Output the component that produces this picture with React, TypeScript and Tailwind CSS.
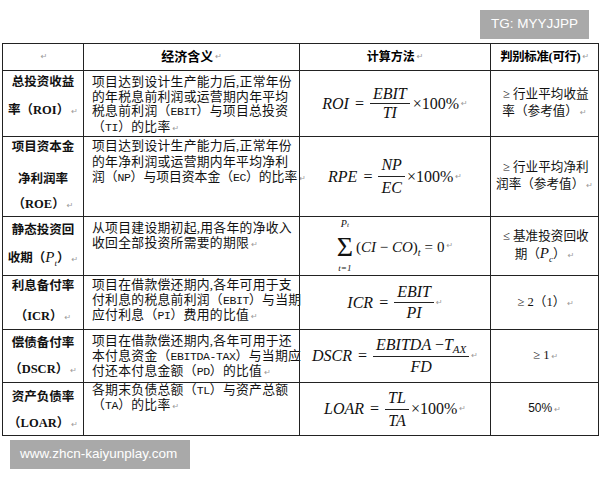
import React from "react";

function Ret() {
  return (
    <span className="font-['DejaVu_Sans',sans-serif] text-[8px] text-[#9a9a9a] ml-[2px] not-italic font-normal">↵</span>
  );
}

function Lat({ children }: { children: React.ReactNode }) {
  return <span className="font-['Liberation_Mono',monospace] text-[11.5px] tracking-[-0.4px]">{children}</span>;
}

function Ge({ c = "≥" }: { c?: string }) {
  return <span className="inline-block w-[12.6px] text-center">{c}</span>;
}

function Frac({ num, den, lh = "leading-[18px]" }: { num: React.ReactNode; den: React.ReactNode; lh?: string }) {
  return (
    <span className="inline-flex flex-col items-center">
      <span className={`px-[3px] ${lh}`}>{num}</span>
      <span className="h-px w-full bg-[#222]"></span>
      <span className={`px-[3px] ${lh}`}>{den}</span>
    </span>
  );
}

const cell = "border-l border-[#222]";
const c1 = `${cell} flex flex-col items-center font-bold text-[12.5px] leading-[20px] text-[#111] whitespace-nowrap`;
const c2 = `${cell} pl-[8px] text-[12.8px] tracking-[0.3px] leading-[14.5px] text-[#111] whitespace-nowrap`;
const c3 = `${cell} flex items-center justify-center font-['Liberation_Serif',serif] text-[16px] text-[#111] whitespace-nowrap`;
const c4 = `${cell} flex flex-col items-center justify-center text-[12.6px] leading-[17px] text-[#111] whitespace-nowrap`;
const grid = "grid grid-cols-[81px_216px_191px_108px] border-t border-[#222]";

export default function App() {
  return (
    <div className="w-[600px] h-[480px] bg-white overflow-hidden font-['Liberation_Serif','Noto_Sans_CJK_SC',serif]">
      <div className="h-[43px] flex justify-end items-start pt-[10px] pr-[11px]">
        <div className="w-[109px] h-[29px] bg-[#a9a9a9] text-white flex items-center justify-center text-[13.5px] font-['Liberation_Sans',sans-serif]">
          TG: MYYJJPP
        </div>
      </div>

      <div className="ml-[2px] w-[597px] border-r border-b border-[#222]">
        {/* header */}
        <div className={`${grid} h-[27px]`}>
          <div className={`${cell} flex items-center justify-center`}>
            <Ret />
          </div>
          <div className={`${cell} flex items-center justify-center font-bold text-[13px]`}>
            经济含义<Ret />
          </div>
          <div className={`${cell} flex items-center justify-center font-bold text-[12px]`}>
            计算方法<Ret />
          </div>
          <div className={`${cell} flex items-center justify-center font-bold text-[12.4px] tracking-[-0.3px]`}>
            判别标准(可行)<Ret />
          </div>
        </div>

        {/* ROI */}
        <div className={`${grid} h-[66px]`}>
          <div className={c1}>
            <div className="mt-[1px]">总投资收益</div>
            <div className="mt-[8px]">率（ROI）<Ret /></div>
          </div>
          <div className={`${c2} pt-[4px]`}>
            <div>项目达到设计生产能力后,正常年份</div>
            <div>的年税息前利润或运营期内年平均</div>
            <div>税息前利润（<Lat>EBIT</Lat>）与项目总投资</div>
            <div>（<Lat>TI</Lat>）的比率<Ret /></div>
          </div>
          <div className={c3}>
            <span className="italic">ROI</span>
            <span className="mx-[6px]">=</span>
            <Frac num={<span className="italic">EBIT</span>} den={<span className="italic">TI</span>} />
            <span className="ml-[3px]">×100%</span>
            <Ret />
          </div>
          <div className={c4}>
            <div><Ge />行业平均收益</div>
            <div>率（参考值）<Ret /></div>
          </div>
        </div>

        {/* ROE */}
        <div className={`${grid} h-[80px]`}>
          <div className={c1}>
            <div className="mt-[0px]">项目资本金</div>
            <div className="mt-[12px]">净利润率</div>
            <div className="mt-[5px]">（ROE）<Ret /></div>
          </div>
          <div className={`${c2} pt-[2px] leading-[15.5px]`}>
            <div>项目达到设计生产能力后,正常年份</div>
            <div>的年净利润或运营期内年平均净利</div>
            <div className="tracking-[0px]">润（<Lat>NP</Lat>）与项目资本金（<Lat>EC</Lat>）的比率<Ret /></div>
          </div>
          <div className={c3}>
            <span className="italic">RPE</span>
            <span className="mx-[6px]">=</span>
            <Frac num={<span className="italic">NP</span>} den={<span className="italic">EC</span>} lh="leading-[22px]" />
            <span className="ml-[2px]">×100%</span>
            <Ret />
          </div>
          <div className={c4}>
            <div><Ge />行业平均净利</div>
            <div>润率（参考值）<Ret /></div>
          </div>
        </div>

        {/* Pt */}
        <div className={`${grid} h-[59px]`}>
          <div className={c1}>
            <div className="mt-[3px]">静态投资回</div>
            <div className="mt-[7px]">
              收期（
              <span className="font-['Liberation_Serif',serif] italic font-normal text-[15px]">P</span>
              <span className="font-['Liberation_Serif',serif] italic font-normal text-[9px] relative top-[4px]">t</span>
              ）<Ret />
            </div>
          </div>
          <div className={`${c2} pt-[4px]`}>
            <div>从项目建设期初起,用各年的净收入</div>
            <div>收回全部投资所需要的期限<Ret /></div>
          </div>
          <div className={c3}>
            <span className="flex flex-col items-center mr-[3px]">
              <span className="italic text-[10px] leading-[11px]">
                P<span className="text-[7px]">t</span>
              </span>
              <span className="text-[28px] leading-[32px]">Σ</span>
              <span className="italic text-[9px] leading-[11px]">t=1</span>
            </span>
            <span className="text-[15px] mt-[2px]">
              (<span className="italic">CI</span> − <span className="italic">CO</span>)
              <span className="italic text-[10px] relative top-[4px]">t</span>
              <span className="mx-[4px]">=</span>0
            </span>
            <Ret />
          </div>
          <div className={c4}>
            <div><Ge c="≤" />基准投资回收</div>
            <div>
              期（
              <span className="font-['Liberation_Serif',serif] italic text-[15px]">P</span>
              <span className="font-['Liberation_Serif',serif] italic text-[9px] relative top-[4px]">c</span>
              ）<Ret />
            </div>
          </div>
        </div>

        {/* ICR */}
        <div className={`${grid} h-[54px]`}>
          <div className={c1}>
            <div className="mt-[0px]">利息备付率</div>
            <div className="mt-[10px]">（ICR）<Ret /></div>
          </div>
          <div className={`${c2} pt-[2px] leading-[15px]`}>
            <div>项目在借款偿还期内,各年可用于支</div>
            <div>付利息的税息前利润（<Lat>EBIT</Lat>）与当期</div>
            <div>应付利息（<Lat>PI</Lat>）费用的比值<Ret /></div>
          </div>
          <div className={c3}>
            <span className="italic">ICR</span>
            <span className="mx-[6px]">=</span>
            <Frac num={<span className="italic">EBIT</span>} den={<span className="italic">PI</span>} lh="leading-[20px]" />
            <Ret />
          </div>
          <div className={c4}>
            <div><Ge />2（1）<Ret /></div>
          </div>
        </div>

        {/* DSCR */}
        <div className={`${grid} h-[53px]`}>
          <div className={c1}>
            <div className="mt-[3px]">偿债备付率</div>
            <div className="mt-[6px]">（DSCR）<Ret /></div>
          </div>
          <div className={`${c2} pt-[4px]`}>
            <div>项目在借款偿还期内,各年可用于还</div>
            <div>本付息资金（<Lat>EBITDA-TAX</Lat>）与当期应</div>
            <div>付还本付息金额（<Lat>PD</Lat>）的比值<Ret /></div>
          </div>
          <div className={c3}>
            <span className="italic">DSCR</span>
            <span className="mx-[6px]">=</span>
            <Frac
              num={
                <span className="italic">
                  EBITDA <span className="not-italic">−</span>T
                  <span className="text-[11px] relative top-[3px]">AX</span>
                </span>
              }
              den={<span className="italic">FD</span>}
              lh="leading-[20px]"
            />
            <Ret />
          </div>
          <div className={c4}>
            <div><Ge />1<Ret /></div>
          </div>
        </div>

        {/* LOAR */}
        <div className={`${grid} h-[53px]`}>
          <div className={c1}>
            <div className="mt-[4px]">资产负债率</div>
            <div className="mt-[6px]">（LOAR）<Ret /></div>
          </div>
          <div className={`${c2} pt-[0px] leading-[15px]`}>
            <div>各期末负债总额（<Lat>TL</Lat>）与资产总额</div>
            <div>（<Lat>TA</Lat>）的比率<Ret /></div>
          </div>
          <div className={c3}>
            <span className="italic">LOAR</span>
            <span className="mx-[6px]">=</span>
            <Frac num={<span className="italic">TL</span>} den={<span className="italic">TA</span>} lh="leading-[22px]" />
            <span className="ml-[2px]">×100%</span>
            <Ret />
          </div>
          <div className={c4}>
            <div className="font-['Liberation_Sans',sans-serif] text-[12px]">50%<Ret /></div>
          </div>
        </div>
      </div>

      <div className="mt-[4px] ml-[10px] w-[180px] h-[29px] bg-[#a9a9a9] text-white flex items-center pl-[10px] text-[13.5px] font-['Liberation_Sans',sans-serif]">
        www.zhcn-kaiyunplay.com
      </div>
    </div>
  );
}
